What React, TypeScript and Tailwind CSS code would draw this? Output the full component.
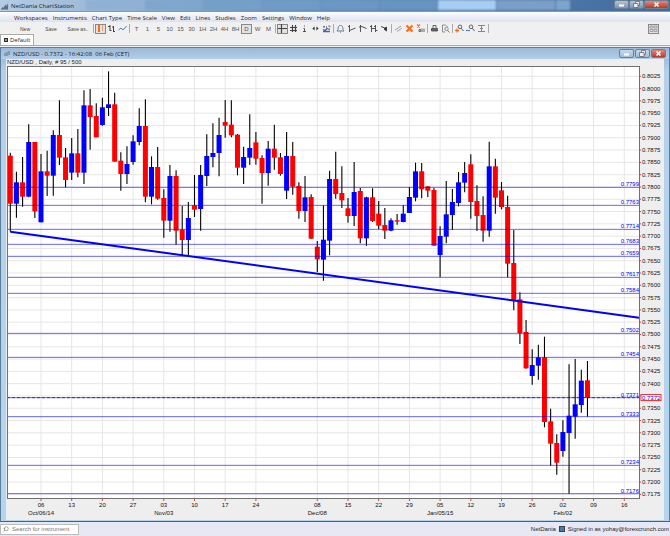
import type { ReactNode } from 'react';
import { Search } from 'lucide-react';

type Candle = [up: 0 | 1, high: number, top: number, bottom: number, low: number];

// vertical values are thirds of a chart unit, measured down from the chart's top
const STEP = 3;
const LEFT = 1;
const RIGHT = 633;
const TOP = 1;
const BOTTOM = 434;

const candles: Candle[] = [
  [0, 263, 272, 416, 500], [1, 320, 352, 416, 458], [0, 276, 352, 395, 425], [1, 178, 231, 395, 397],
  [0, 231, 231, 439, 459], [1, 267, 319, 472, 472], [0, 257, 319, 332, 393], [1, 196, 210, 332, 392],
  [0, 106, 210, 278, 300], [0, 249, 277, 345, 367], [1, 219, 265, 323, 345], [0, 192, 265, 323, 337],
  [1, 76, 121, 323, 357], [0, 72, 121, 156, 254], [0, 115, 153, 217, 217], [1, 98, 127, 180, 182],
  [1, 19, 118, 129, 153], [0, 83, 118, 290, 290], [0, 262, 287, 327, 377], [1, 244, 297, 327, 357],
  [1, 211, 229, 291, 299], [1, 130, 183, 231, 241], [0, 103, 183, 395, 412], [1, 274, 306, 395, 418],
  [0, 246, 306, 401, 404], [0, 373, 399, 467, 518], [1, 300, 333, 467, 500], [0, 316, 333, 497, 539],
  [0, 423, 494, 525, 570], [1, 411, 459, 525, 571], [0, 330, 421, 434, 456], [1, 300, 330, 432, 497],
  [1, 208, 273, 333, 363], [1, 175, 264, 276, 307], [1, 158, 210, 264, 334], [0, 105, 171, 182, 218],
  [0, 106, 179, 211, 217], [0, 207, 209, 308, 331], [1, 245, 276, 308, 357], [1, 148, 249, 278, 300],
  [0, 201, 232, 281, 299], [0, 271, 279, 324, 416], [1, 228, 251, 324, 362], [0, 179, 251, 278, 314],
  [0, 264, 277, 327, 332], [1, 201, 273, 377, 402], [0, 231, 273, 365, 389], [0, 352, 363, 438, 461],
  [1, 333, 397, 438, 471], [0, 388, 396, 521, 521], [0, 528, 545, 583, 621], [1, 421, 524, 584, 647],
  [1, 317, 342, 527, 571], [0, 260, 342, 387, 401], [0, 304, 384, 406, 429], [0, 399, 430, 453, 473],
  [1, 291, 381, 453, 483], [0, 369, 378, 520, 535], [1, 395, 397, 520, 542], [0, 370, 397, 468, 471],
  [0, 408, 446, 482, 493], [0, 429, 480, 497, 522], [1, 460, 466, 497, 499], [0, 447, 466, 470, 479],
  [1, 420, 446, 471, 472], [1, 366, 396, 444, 444], [1, 293, 319, 398, 409], [0, 294, 319, 373, 400],
  [0, 364, 364, 377, 396], [0, 369, 375, 542, 542], [1, 484, 513, 570, 636], [1, 348, 448, 515, 535],
  [1, 372, 411, 450, 495], [1, 321, 352, 414, 424], [1, 291, 324, 353, 382], [0, 268, 298, 411, 461],
  [0, 361, 408, 453, 498], [0, 394, 450, 497, 530], [1, 230, 304, 497, 515], [0, 281, 304, 398, 446],
  [0, 351, 376, 426, 433], [0, 392, 426, 596, 637], [0, 495, 594, 706, 736], [0, 682, 703, 804, 837],
  [0, 765, 801, 910, 911], [1, 853, 900, 933, 959], [1, 839, 877, 902, 944], [0, 815, 877, 1071, 1087],
  [0, 1031, 1069, 1136, 1202], [0, 1108, 1134, 1193, 1229], [1, 1066, 1101, 1158, 1175],
  [1, 898, 1052, 1104, 1286], [1, 882, 1018, 1055, 1121], [1, 914, 947, 1020, 1043], [0, 888, 946, 998, 1055],
];

const levels: [string, number][] = [
  ['0.7799', 367], ['0.7763', 421], ['0.7714', 493], ['0.7683', 538], ['0.7659', 574],
  ['0.7617', 637], ['0.7584', 685], ['0.7502', 805], ['0.7454', 877], ['0.7371', 998],
  ['0.7333', 1055], ['0.7234', 1201], ['0.7176', 1286],
];

const dates: [number, string, string?][] = [
  [5, '06', 'Oct/06/14'], [10, '13'], [15, '20'], [20, '27'], [25, '03', 'Nov/03'], [30, '10'],
  [35, '17'], [40, '24'], [50, '08', 'Dec/08'], [55, '15'], [60, '22'], [65, '29'],
  [70, '05', 'Jan/05/15'], [75, '12'], [80, '19'], [85, '26'], [90, '02', 'Feb/02'], [95, '09'], [100, '16'],
];

const prices = Array.from({ length: 35 }, (_, i) => 8025 - i * 25);
const xAt = (i: number) => 4.3 + i * 6.14;
const yAt = (v: number) => v / STEP;
const priceY = (p: number) => 11.3 + (8025 - p) * 0.4918;

function Chart() {
  return (
    <svg viewBox="0 0 658 455" className="block w-full font-['Liberation_Sans',sans-serif] text-[6px]" role="img" aria-label="NZD/USD daily">
      <rect x={LEFT} y={TOP} width={RIGHT - LEFT} height={BOTTOM - TOP} fill="#fff" />
      {prices.map((p) => (
        <line key={p} x1={LEFT} x2={RIGHT} y1={priceY(p)} y2={priceY(p)} stroke="#e6e6e6" />
      ))}
      {dates.map(([i]) => (
        <line key={i} x1={xAt(i)} x2={xAt(i)} y1={TOP} y2={BOTTOM} stroke="#e6e6e6" />
      ))}

      {candles.map(([up, high, top, bottom, low], i) => (
        <g key={i}>
          <line x1={xAt(i)} x2={xAt(i)} y1={yAt(high)} y2={yAt(low)} stroke="#000" strokeWidth="1.1" />
          <rect x={xAt(i) - 2.5} y={yAt(top)} width="5" height={yAt(bottom - top)} fill={up ? '#0000ff' : '#ff0000'} />
        </g>
      ))}

      {levels.map(([label, v]) => (
        <g key={label}>
          <line x1={LEFT} x2={RIGHT} y1={yAt(v)} y2={yAt(v)} stroke="#0000ff" strokeOpacity="0.6" />
          <text x={RIGHT} y={yAt(v) - 1} textAnchor="end" fill="#0000ee">{label}</text>
        </g>
      ))}
      <line x1={LEFT} x2={RIGHT} y1={yAt(998)} y2={yAt(998)} stroke="#000066" strokeOpacity="0.6" strokeDasharray="3 2" />
      <line x1={4.3} y1={yAt(500)} x2={RIGHT} y2={yAt(758)} stroke="#0000ff" strokeWidth="2" />

      <rect x={LEFT + 0.5} y={TOP + 0.5} width={RIGHT - LEFT} height={BOTTOM - TOP - 1} fill="none" stroke="#707070" />

      {prices.map((p) => (
        <g key={p}>
          <line x1={RIGHT} x2={RIGHT + 2} y1={priceY(p)} y2={priceY(p)} stroke="#e04040" />
          {p !== 7375 && (
            <text x={RIGHT + 3} y={priceY(p) + 2} fill="#111">{`0.${p}`}</text>
          )}
        </g>
      ))}
      <rect x={RIGHT + 2} y={329.5} width="20" height="6" fill="#fff" stroke="#ff3030" />
      <text x={RIGHT + 3} y={335} fill="#0000ee">0.7372</text>

      {dates.map(([i, day, month]) => (
        <g key={i} textAnchor="middle" fill="#111">
          <line x1={xAt(i)} x2={xAt(i)} y1={BOTTOM} y2={BOTTOM + 2} stroke="#e04040" />
          <text x={xAt(i)} y={BOTTOM + 8}>{day}</text>
          {month && <text x={xAt(i)} y={BOTTOM + 16}>{month}</text>}
        </g>
      ))}
    </svg>
  );
}

function Icon({ children, color = '#444' }: { children: ReactNode; color?: string }) {
  return (
    <svg viewBox="0 0 9 9" className="size-[9px]" fill="none" stroke={color} aria-hidden="true">
      {children}
    </svg>
  );
}

function Tool({ label, active, children }: { label: string; active?: boolean; children: ReactNode }) {
  return (
    <button
      aria-label={label}
      className={`flex h-[10px] w-[11px] shrink-0 items-center justify-center border text-[#555] ${
        active ? 'border-[#888] bg-[#e2e2e2]' : 'border-transparent'
      }`}
    >
      {children}
    </button>
  );
}

function Divider() {
  return <span className="mx-px h-[9px] w-px shrink-0 bg-[#aaa]" />;
}

function WindowButtons({ small }: { small?: boolean }) {
  const base = 'flex h-[9px] items-center justify-center border border-[#6b7f96] rounded-xs';
  const glass = small ? 'from-[#c5d8ea] to-[#a3bed9]' : 'from-[#b4c3d3] to-[#7f96b0]';
  return (
    <div className={`flex shrink-0 ${small ? 'gap-px' : 'mr-px'}`}>
      <button aria-label="Minimize" className={`${base} w-[15px] bg-linear-to-b ${glass}`}>
        <Icon color="#fff"><path d="M2 5.5h5" strokeWidth="2" /></Icon>
      </button>
      <button aria-label="Restore" className={`${base} w-[15px] bg-linear-to-b ${glass}`}>
        <Icon color="#667"><path d="M3.5 3V1.500h4v4H6M1.500 3.500H6v4H1.500z" fill="#eee" strokeWidth=".8" /></Icon>
      </button>
      <button aria-label="Close" className={`${base} ${small ? 'w-[15px]' : 'w-[25px]'} bg-linear-to-b from-[#dd8a7c] to-[#bd3620]`}>
        <Icon color="#fff"><path d="M2.500 2.500l4 4M6.500 2.500l-4 4" strokeWidth="1.500" /></Icon>
      </button>
    </div>
  );
}

const menus = [
  'Workspaces', 'Instruments', 'Chart Type', 'Time Scale', 'View', 'Edit',
  'Lines', 'Studies', 'Zoom', 'Settings', 'Window', 'Help',
];

const periods = ['T', '1', '5', '10', '15', '30', '1H', '2H', '4H', '8H', 'D', 'W', 'M'];

function Toolbar() {
  return (
    <div className="flex h-[13px] items-center bg-[#f0f0f0] pl-3 font-['Liberation_Sans',sans-serif]">
      <button className="w-[26px] text-[5px] text-[#444]">New</button>
      <button className="w-[26px] text-[5px] text-[#444]">Save</button>
      <button className="w-[28px] text-[5px] text-[#444]">Save as..</button>
      <Divider />
      <Tool label="Candles" active>
        <Icon color="#ff6a13"><path d="M3 1v7" strokeWidth="2" /><path d="M6.500 1v6" stroke="#e0a080" /></Icon>
      </Tool>
      <Tool label="Bars">
        <Icon><path d="M3 1v6M1 2.500h2M3 6.500h1.500M6.500 2v6M5 3h1.500M6.500 7.500H8" /></Icon>
      </Tool>
      <Tool label="Line">
        <Icon color="#4d83b8"><path d="M.5 6L3 4l2 2 3.500-4" /></Icon>
      </Tool>
      <Divider />
      {periods.map((p) => (
        <Tool key={p} label={p} active={p === 'D'}>{p}</Tool>
      ))}
      <Divider />
      <Tool label="Crosshair" active>
        <Icon><path d="M3.500 0v9M0 4.500h9" strokeWidth="1.200" /></Icon>
      </Tool>
      <Tool label="Grid">
        <Icon><path d="M3.500 1v7M6.500 1v7M1 3.500h7M1 6.500h7" strokeWidth="1.200" /></Icon>
      </Tool>
      <Tool label="Info">
        <Icon><path d="M4.500 1.500v1M3.500 4.500h1v3M3 7.500h3" strokeWidth=".9" /></Icon>
      </Tool>
      <Tool label="Scroll">
        <Icon><path d="M3.500 2.800l-2 1.700 2 1.700zM5.500 2.800l2 1.700-2 1.700z" fill="#333" strokeWidth=".3" /></Icon>
      </Tool>
      <Tool label="Snapshot">
        <Icon color="#4b62a0"><path d="M1 7.500h7M1 5.500l2 1 2-2 3 1" strokeWidth="1.300" /><path d="M1 2l2 1.500M3 2L1 3.500M4.500 2v2M6 2h2v1.500" stroke="#667" strokeWidth=".8" /></Icon>
      </Tool>
      <Divider />
      <Tool label="Alert">
        <Icon color="#55708f"><path d="M1 7h7L7 5.500C7 3 6.500 1.500 4.500 1.500S2 3 2 5.500zM4 8.200h1" strokeWidth=".9" /></Icon>
      </Tool>
      <Tool label="Trend line">
        <Icon><path d="M2.500 1v7M1 2.500h1.500M2.500 6.500L8.500 4" strokeWidth=".9" /></Icon>
      </Tool>
      <Tool label="Resistance line">
        <Icon><path d="M2.500 1v7M1 3h1.500M2.500 2l6 2.500" strokeWidth=".9" /></Icon>
      </Tool>
      <Tool label="Range lines">
        <Icon><path d="M2.500 1v7M6.500 1v7M1 2.500h1.500M2.500 4.500h4M6.500 6.500h2M5 2.500h1.500" strokeWidth=".9" /></Icon>
      </Tool>
      <Tool label="Arrow">
        <Icon><path d="M1 2.500l5 2" /><path d="M6.500 3v4L4 5z" fill="#222" /></Icon>
      </Tool>
      <Divider />
      <Tool label="Parallel lines">
        <Icon color="#888"><path d="M1 6l6-4M3 7.500l5-3.500" strokeWidth=".8" /></Icon>
      </Tool>
      <Tool label="Delete">
        <Icon color="#ff6a13"><path d="M1.500 1.500l6 6M7.500 1.500l-6 6" strokeWidth="2" /></Icon>
      </Tool>
      <Tool label="Delete all">
        <Icon color="#ff6a13"><path d="M1 .5l3 3M4 .5l-3 3" strokeWidth="1.200" /><path d="M3 7.500V5.500h1.500v2H3M6 4.500v3.500M8 4.500v3.500" stroke="#444" strokeWidth=".8" /></Icon>
      </Tool>
      <Divider />
      <Tool label="Print">
        <Icon><path d="M3 4V1.500h3V4" strokeWidth=".8" /><path d="M1.500 4.500h6V7h-6z" fill="#666" strokeWidth=".8" /></Icon>
      </Tool>
      <Tool label="Preview">
        <Icon color="#777"><path d="M4 8H1.500V1h3l2 2" strokeWidth=".8" /><circle cx="5.500" cy="5" r="1.700" strokeWidth=".8" /><path d="M6.700 6.500L8.500 8.500" /></Icon>
      </Tool>
      <Divider />
      <Tool label="Zoom in">
        <Icon><circle cx="5" cy="2.800" r="1.800" strokeWidth=".8" /><path d="M6.300 4.300L8.500 7" strokeWidth=".9" /><path d="M0 6.500h4M2 4.500v4" stroke="#ff6a13" strokeWidth="1.300" /></Icon>
      </Tool>
      <Tool label="Zoom out">
        <Icon><circle cx="5" cy="2.800" r="1.800" strokeWidth=".8" /><path d="M6.300 4.300L8.500 7" strokeWidth=".9" /><path d="M0 6.500h4" stroke="#4d83b8" strokeWidth="1.200" /></Icon>
      </Tool>
      <Tool label="Fit height">
        <Icon color="#888"><path d="M1 1.500h7M1 7.500h7M4.500 2v5M3 4.500h3" /></Icon>
      </Tool>
      <Divider />
      <div className="ml-auto pr-[11px]">
        <Tool label="Layout" active>
          <Icon color="#888"><path d="M1 2h3v2H1zM5 2h3v2H5zM1 5.500h3v2H1zM5 5.500h3v2H5z" strokeWidth=".7" /></Icon>
        </Tool>
      </div>
    </div>
  );
}

export default function App() {
  return (
    <div className="flex min-h-screen flex-col bg-[#f0f0f0] font-['Open_Sans','Noto_Sans',sans-serif] text-[6px] leading-[8px] text-[#222]">
      <header className="flex h-[12px] items-start justify-between border-b border-[#7f98b3] bg-linear-to-r from-[#b5cce3] via-[#6a96c2] via-40% to-[#3f6a9c]">
        <div className="flex h-[11px] items-center gap-[2px] pl-px">
          <svg viewBox="0 0 9 8" className="size-[8px]" aria-hidden="true">
            <path d="M0 7l2-2 1 1 2-4 1 2 2-3v7H0z" fill="#5a6f85" />
          </svg>
          <h1>NetDania ChartStation</h1>
        </div>
        <div className="mr-6 ml-3 flex h-[10px] flex-1 gap-px blur-[1px]">
          <span className="h-full flex-1 bg-[#8fb1d3]" />
          <span className="h-full flex-1 bg-[#7fa6cd]" />
          <span className="h-full flex-1 bg-[#759fc9]" />
          <span className="h-full flex-1 bg-[#709bc6]" />
          <span className="h-full flex-1 bg-[#6b97c3]" />
          <span className="h-full flex-1 bg-[#6794c0]" />
          <span className="h-full flex-1 bg-[#a8cdf2]" />
          <span className="h-full flex-1 bg-[#7b9fc6]" />
          <span className="mr-5 h-full w-[14px] bg-[#7ea6cd]" />
        </div>
        <WindowButtons />
      </header>

      <nav className="flex h-[10px] items-center gap-[5px] border-t border-white bg-linear-to-b from-[#f8f9fd] to-[#dde2f0] pl-[14px]">
        {menus.map((m) => (
          <button key={m}>{m}</button>
        ))}
      </nav>

      <Toolbar />

      <div className="flex h-[11px] items-end border-b border-[#aaa] bg-[#f0f0f0]">
        <button className="flex h-[11px] items-center gap-[2px] border border-b-0 border-[#aaa] bg-white px-[3px]">
          <svg viewBox="0 0 5 5" className="size-[4px]" aria-hidden="true">
            <rect width="5" height="5" fill="#222" />
            <path d="M1 1l3 3M4 1L1 4" stroke="#fff" strokeWidth=".7" />
          </svg>
          Default
        </button>
      </div>

      <main className="mt-px flex-1 border border-b-[#2b6f80] border-[#5c7f99] bg-linear-to-b from-[#8fb0d0] via-[#b5cfea] via-5% to-[#b5d5ee]">
        <div className="flex h-[11px] items-center justify-between bg-linear-to-b from-[#9bb9d6] to-[#b3cdea] px-[3px]">
          <div className="flex items-center gap-[3px]">
            <svg viewBox="0 0 6 5" className="h-[5px] w-[6px]" aria-hidden="true">
              <path d="M1 2v3M3 1v4M5 0v4" stroke="#5a6f85" />
            </svg>
            <h2 className="whitespace-pre">NZD/USD - 0.7372 - 16:42:08  06 Feb (CET)</h2>
          </div>
          <WindowButtons small />
        </div>
        <div className="mx-[5px] bg-[#eeeeee]">
          <p className="h-[6px] pl-px font-['Liberation_Sans',sans-serif] leading-[6px]">NZD/USD , Daily, # 95 / 500</p>
          <Chart />
        </div>
      </main>

      <footer className="flex h-[14px] items-center justify-between bg-[#e8e8f5] pr-px font-['Liberation_Sans',sans-serif]">
        <label className="flex h-[11px] w-[79px] items-center gap-[3px] border border-[#bbb] bg-white pl-[2px]">
          <Search className="size-[6px] shrink-0 -scale-x-100 text-[#555]" />
          <input aria-label="Search for instrument" placeholder="Search for instrument" className="w-full min-w-0 outline-none placeholder:text-[#777]" />
        </label>
        <div className="flex items-center gap-[3px]">
          <span>NetDania</span>
          <span className="size-[6px] border border-[#345] bg-[#4a77a5]" />
          <span>Signed in as yohay@forexcrunch.com</span>
        </div>
      </footer>
    </div>
  );
}
